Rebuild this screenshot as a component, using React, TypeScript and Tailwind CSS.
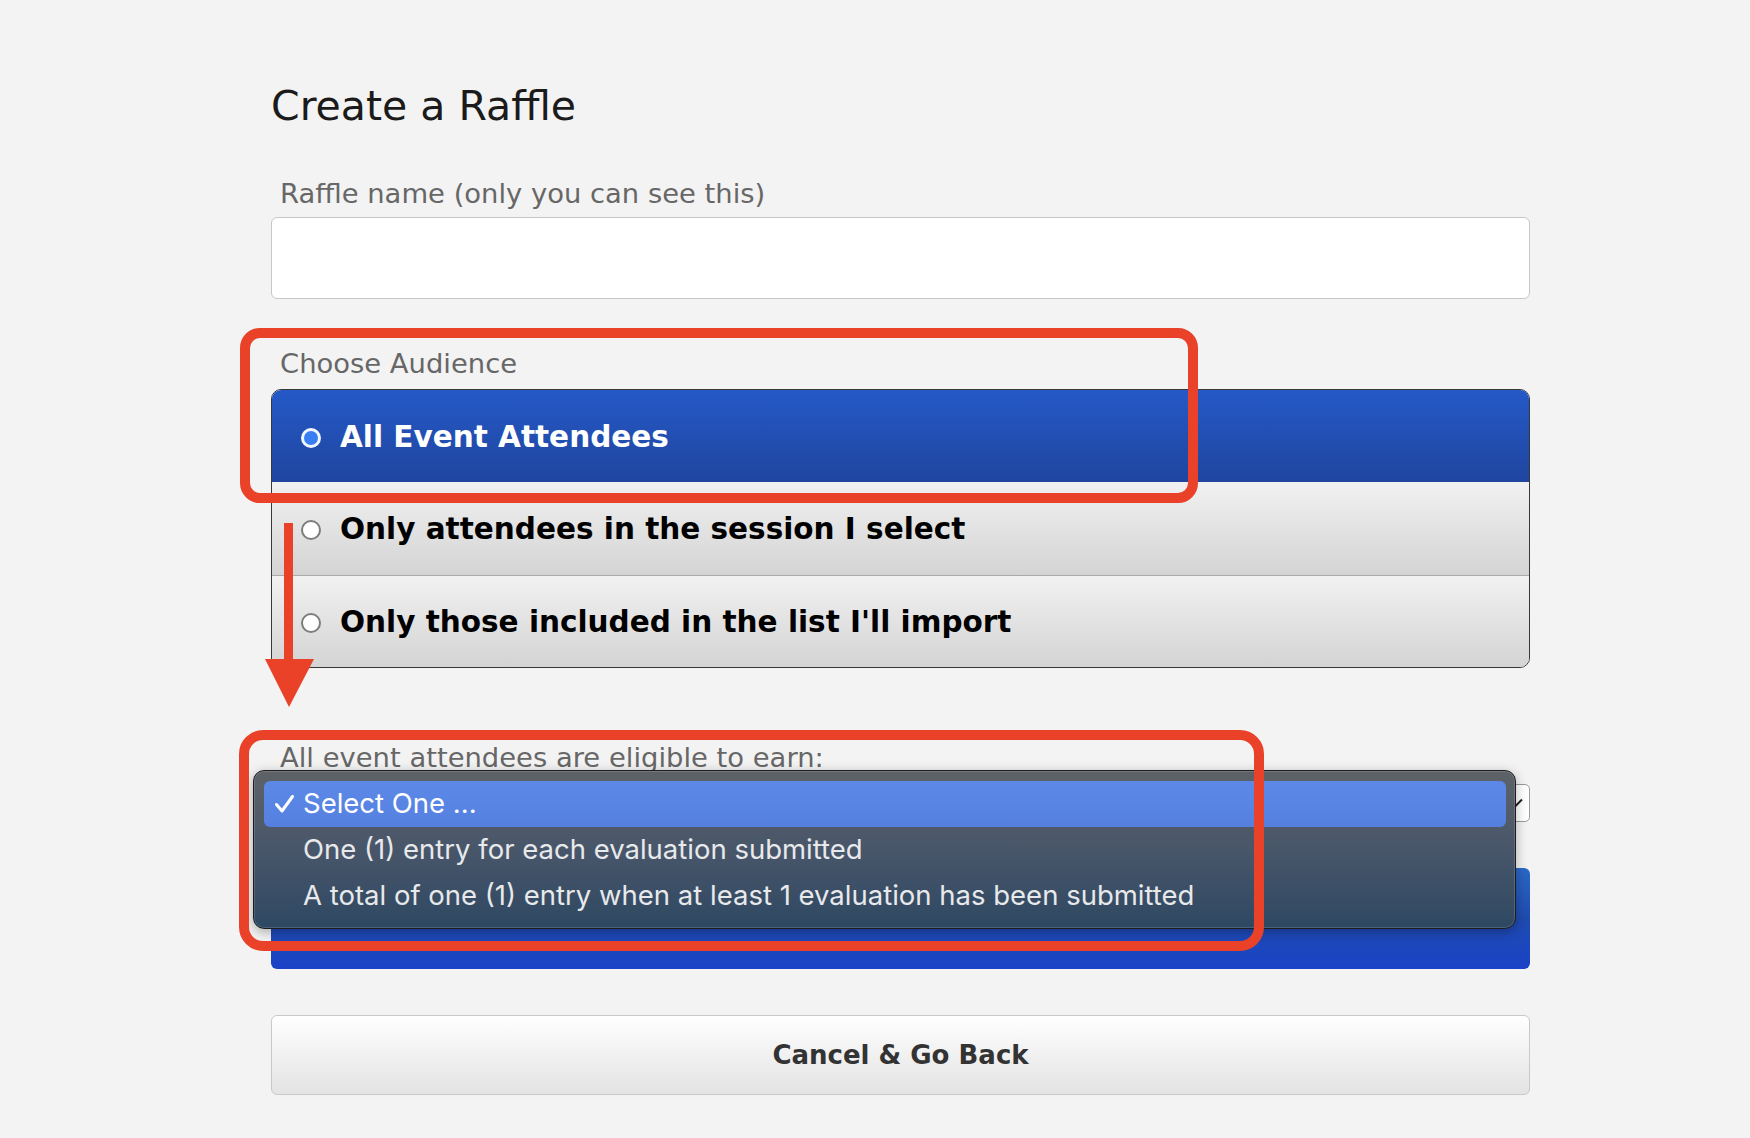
import { ReactElement } from "react";

type Option = {
  label: string;
  selected: boolean;
};

const audiences: Option[] = [
  { label: "All Event Attendees", selected: true },
  { label: "Only attendees in the session I select", selected: false },
  { label: "Only those included in the list I'll import", selected: false },
];

const entries: Option[] = [
  { label: "Select One ...", selected: true },
  { label: "One (1) entry for each evaluation submitted", selected: false },
  {
    label: "A total of one (1) entry when at least 1 evaluation has been submitted",
    selected: false,
  },
];

const Radio = ({ checked }: { checked: boolean }): ReactElement =>
  checked ? (
    <span className="block size-[20px] shrink-0 rounded-full border-[3px] border-[#f2f6ff] bg-[#3a7ef4]" />
  ) : (
    <span className="block size-[20px] shrink-0 rounded-full border-2 border-[#7d7d7d] bg-white" />
  );

const AudienceList = (): ReactElement => {
  const rows = audiences.map((item, i) => {
    const first = i === 0;
    return (
      <div
        key={item.label}
        className={`flex items-center gap-[19px] pl-[29px] pt-[3px] ${
          first
            ? "h-[92px] bg-gradient-to-b from-[#2559c7] to-[#1f459f] text-white"
            : "bg-gradient-to-b from-[#f1f1f1] to-[#d4d4d4] text-black"
        } ${i === 1 ? "h-[93px]" : ""} ${
          i === 2 ? "h-[92px] border-t border-[#a9a9a9]" : ""
        }`}
      >
        <Radio checked={item.selected} />
        <span className="text-[29.5px] font-bold leading-none">{item.label}</span>
      </div>
    );
  });

  return (
    <div className="mt-[9px] overflow-hidden rounded-[10px] border border-[#383838]">
      {rows}
    </div>
  );
};

const EntryMenu = (): ReactElement => {
  const items = entries.map((item) => (
    <div
      key={item.label}
      className={`flex h-[46px] items-center rounded-[6px] pl-[11px] ${
        item.selected
          ? "bg-gradient-to-b from-[#5c89e7] to-[#5580e0] text-white"
          : "text-[#e8e9eb]"
      }`}
    >
      <span className="flex w-[28px] shrink-0">
        {item.selected && (
          <svg width="19" height="18" viewBox="0 0 19 18" fill="none">
            <path
              d="M1.5 9.5 L7 16 L17.5 1.5"
              stroke="white"
              strokeWidth="3"
              strokeLinecap="round"
              strokeLinejoin="round"
            />
          </svg>
        )}
      </span>
      <span className="text-[27.5px] leading-none">{item.label}</span>
    </div>
  ));

  return (
    <div className="absolute -left-[18px] -top-[14px] h-[159px] w-[1263px] rounded-[11px] border border-[#1d1d1f] bg-gradient-to-b from-[#5e6267] via-[#48566a] to-[#2e4862] pb-[9px] pl-[10px] pr-[9px] pt-[10px] font-['Inter',sans-serif] shadow-[0_3px_12px_rgba(0,0,0,0.3),inset_0_0_0_1px_rgba(255,255,255,0.14)]">
      {items}
    </div>
  );
};

const App = (): ReactElement => {
  return (
    <div className="relative min-h-screen w-full overflow-hidden bg-[#f3f3f3] font-['DejaVu_Sans',sans-serif]">
      <div className="ml-[271px] w-[1259px] pb-[44px] pt-[82px]">
        <h1 className="text-[41px] font-normal leading-[48px] text-[#1b1b1b]">
          Create a Raffle
        </h1>

        <label className="mt-[48px] block pl-[9px] text-[27.4px] leading-[32px] text-[#676767]">
          Raffle name (only you can see this)
        </label>
        <input
          type="text"
          className="mt-[7px] block h-[82px] w-full rounded-[6px] border border-[#c7c7c7] bg-white"
        />

        <label className="mt-[49px] block pl-[9px] text-[27.4px] leading-[32px] text-[#676767]">
          Choose Audience
        </label>
        <AudienceList />

        <label className="mt-[74px] block pl-[9px] text-[27.4px] leading-[32px] text-[#676767]">
          All event attendees are eligible to earn:
        </label>
        <div className="relative mt-[10px]">
          <div className="flex h-[38px] items-center justify-end rounded-[5px] border border-[#9b9b9b] bg-white pr-[6px]">
            <svg width="16" height="10" viewBox="0 0 16 10" fill="none">
              <path d="M1 1.5 L8 8.5 L15 1.5" stroke="#222" strokeWidth="2" />
            </svg>
          </div>
          <EntryMenu />
        </div>

        <button className="mt-[46px] flex h-[101px] w-full items-center justify-center rounded-[6px] bg-gradient-to-b from-[#2b68c6] via-[#1f4bb0] to-[#1b42c7] text-[26px] font-bold text-white">
          Create Raffle
        </button>

        <button className="mt-[46px] flex h-[80px] w-full items-center justify-center rounded-[6px] border border-[#c9c9c9] bg-gradient-to-b from-white to-[#e3e3e3] text-[26px] font-bold text-[#333]">
          Cancel &amp; Go Back
        </button>
      </div>

      {/* annotations */}
      <div className="pointer-events-none absolute left-[240px] top-[328px] h-[175px] w-[958px] rounded-[20px] border-[10px] border-[#ea4129]" />
      <div className="pointer-events-none absolute left-[239px] top-[730px] h-[221px] w-[1025px] rounded-[24px] border-[10px] border-[#ea4129]" />
      <svg
        className="pointer-events-none absolute left-[260px] top-[520px]"
        width="60"
        height="190"
        viewBox="0 0 60 190"
      >
        <rect x="24" y="3" width="9" height="138" fill="#ea4129" />
        <polygon points="5,139 54,139 29,187" fill="#ea4129" />
      </svg>
    </div>
  );
};

export default App;
